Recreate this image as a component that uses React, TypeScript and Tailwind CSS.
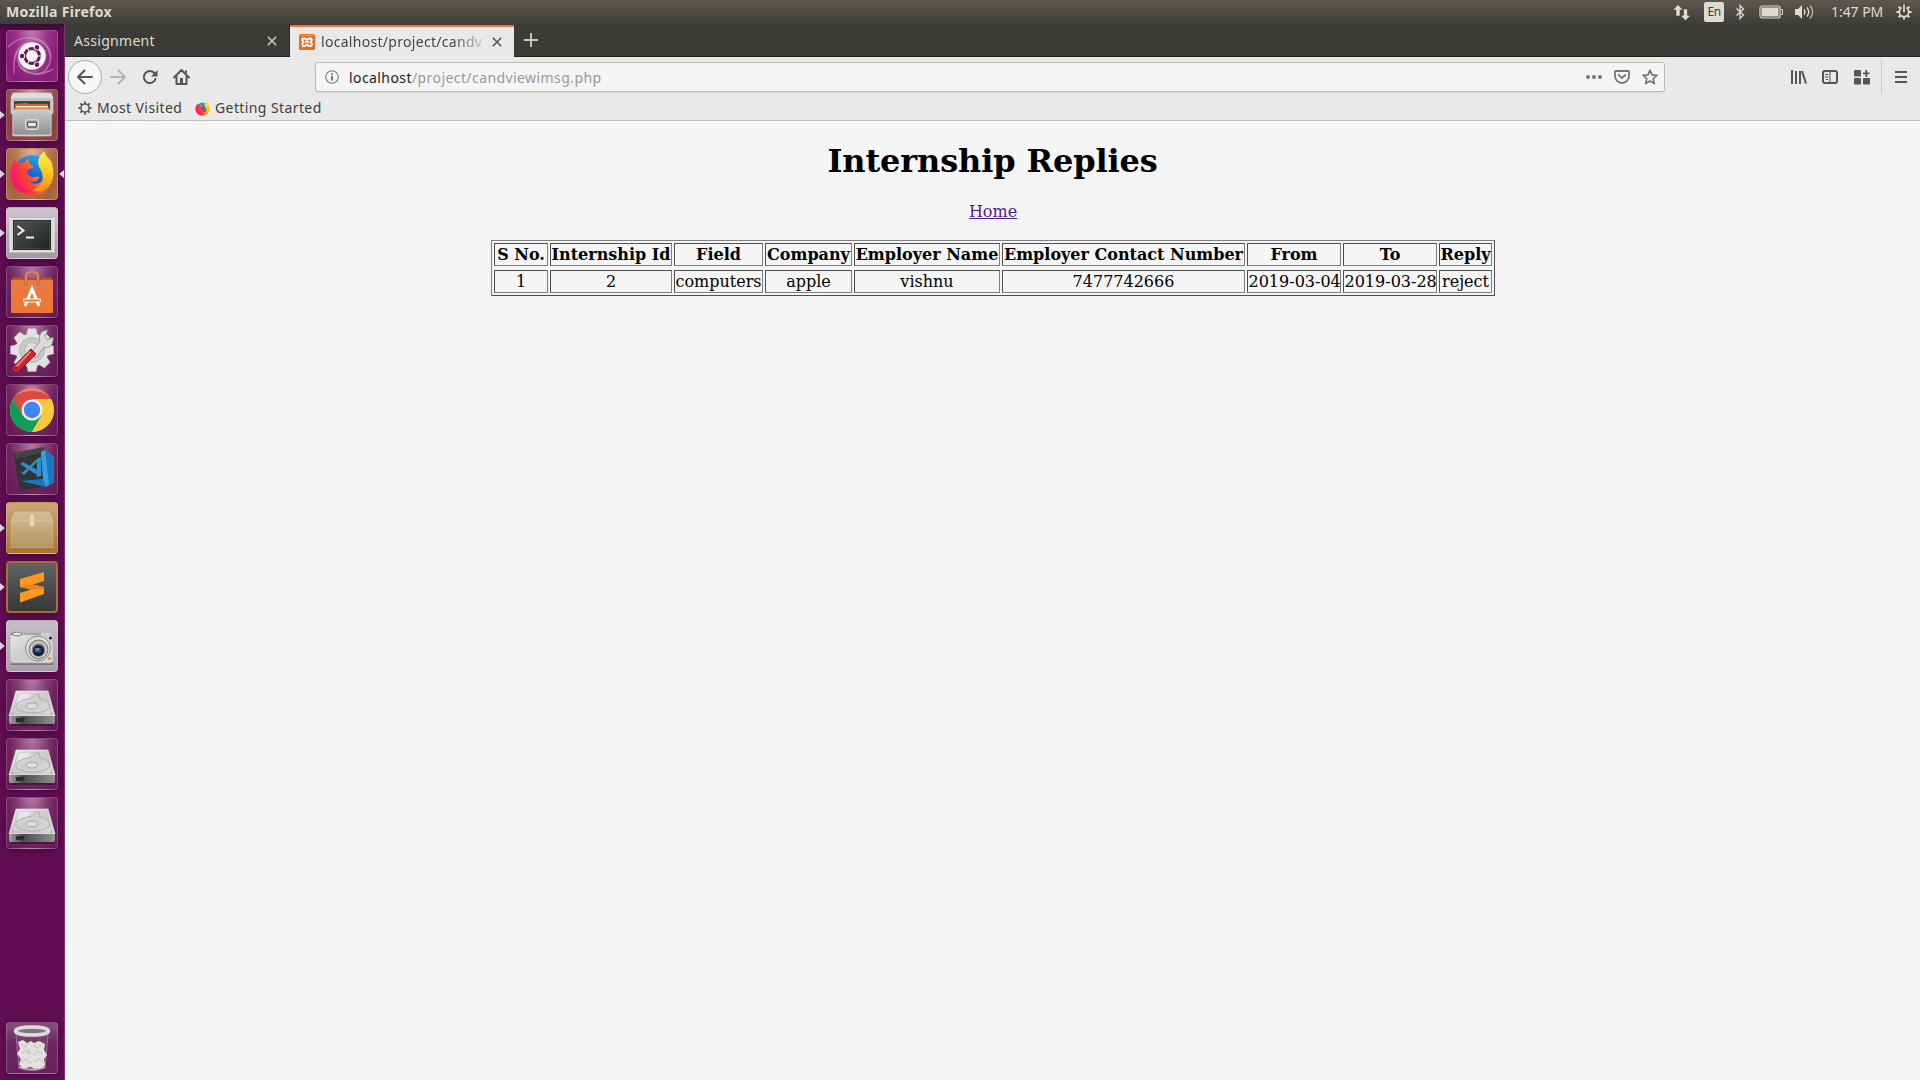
import type { ReactNode } from "react";

const columns = [
  { label: "S No.", value: "1", width: "w-[54px]" },
  { label: "Internship Id", value: "2", width: "w-[122px]" },
  { label: "Field", value: "computers", width: "w-[89px]" },
  { label: "Company", value: "apple", width: "w-[87px]" },
  { label: "Employer Name", value: "vishnu", width: "w-[146px]" },
  { label: "Employer Contact Number", value: "7477742666", width: "w-[243px]" },
  { label: "From", value: "2019-03-04", width: "w-[94px]" },
  { label: "To", value: "2019-03-28", width: "w-[94px]" },
  { label: "Reply", value: "reject", width: "w-[53px]" },
];

function IndicatorIcons() {
  return (
    <>
      <svg className="mr-[13px]" width="18" height="17" viewBox="0 0 18 17" fill="#dfdbd2">
        <path d="M5 .5 10 6H7v6H3V6H0zM12.500 16.500 7.500 11.500h3V5h4v6.500h3z" stroke="#3c3b37" strokeWidth=".5" />
      </svg>
      <span className="mr-[11px] flex h-5 w-5 items-center justify-center rounded-[2px] bg-[#dfdbd2] text-[12px] tracking-[-0.5px] text-[#3c3b37]">En</span>
      <svg className="mr-[13px]" width="11" height="16" viewBox="0 0 11 16" fill="none" stroke="#dfdbd2" strokeWidth="1.300">
        <path d="m1.500 4.500 7 6.500-3.500 3.500v-13L8.500 5l-7 6.500" />
      </svg>
      <svg className="mr-[12px]" width="24" height="14" viewBox="0 0 24 14">
        <rect x="1" y="1" width="20" height="12" rx="2" fill="none" stroke="#dfdbd2" strokeWidth="1.200" />
        <rect x="2.500" y="2.500" width="17" height="9" fill="#dfdbd2" />
        <path d="M22 4.500h1.500v5H22" fill="none" stroke="#dfdbd2" />
      </svg>
      <svg className="mr-[16px]" width="20" height="16" viewBox="0 0 20 16">
        <path d="M0 5h3l4-4v14l-4-4H0z" fill="#dfdbd2" />
        <g fill="none" stroke="#dfdbd2" strokeWidth="1.300">
          <path d="M9 5.500q2 2.500 0 5M12 3.500q3.500 4.500 0 9" />
          <path d="M15 1.500q5.500 6.500 0 13" stroke="#bcb9b0" />
        </g>
      </svg>
    </>
  );
}

function Gear({ size, color, power = false }: { size: number; color: string; power?: boolean }) {
  return (
    <svg width={size} height={size} viewBox="0 0 16 16" fill="none" stroke={color}>
      <circle cx="8" cy="8" r="4.700" strokeWidth="1.700" />
      {[0, 45, 90, 135, 180, 225, 270, 315].map((a) => (
        <path key={a} d="M8 3V.4" strokeWidth="2" transform={`rotate(${a} 8 8)`} />
      ))}
      {power && (
        <>
          <path d="M8 0v8" stroke="#484640" strokeWidth="4.500" />
          <path d="M8 .5V8" strokeWidth="1.800" />
        </>
      )}
    </svg>
  );
}

function FirefoxLogo({ className }: { className: string }) {
  return (
    <svg className={className} viewBox="0 0 48 48">
      <defs>
        <linearGradient id="foxBody" x1="0" y1=".7" x2="1" y2=".2">
          <stop offset="0" stopColor="#f5156c" />
          <stop offset=".35" stopColor="#ff4133" />
          <stop offset=".7" stopColor="#ff9a16" />
          <stop offset="1" stopColor="#fff036" />
        </linearGradient>
        <linearGradient id="foxGlobe" x1=".7" y1="0" x2=".3" y2="1">
          <stop offset="0" stopColor="#17aeef" />
          <stop offset=".5" stopColor="#1768d8" />
          <stop offset="1" stopColor="#332aa0" />
        </linearGradient>
        <linearGradient id="foxTail" x1="0" y1="0" x2="0" y2="1">
          <stop offset="0" stopColor="#fff44f" />
          <stop offset=".5" stopColor="#ffca21" />
          <stop offset="1" stopColor="#ff8b17" />
        </linearGradient>
      </defs>
      <circle cx="24" cy="24" r="19" fill="url(#foxGlobe)" />
      <path d="M7 8c0 3 1 5 2 6 2-2 5-2 7-1 1-2 3-4 5-5-1 3 0 5 2 7l3 2c-2 2-5 2-7 4 0 3 0 4 3 6 4 3 7-1 10 1-2 5-7 6-11 5 9 5 18 0 18-10 0-7-7-9-5-15 1-3 3-5 4-7 0 5 5 7 7 12 4 13-1 33-21 34C4 47-2 29 3 16c1-3 2-6 4-8z" fill="url(#foxBody)" />
      <path d="M37 1c-6 5-8 11-5 17 3 5 5 10 2 16-2 4-6 6-10 7 8 5 18 0 21-8 4-10 1-19-5-25-2-2-3-4-3-7z" fill="url(#foxTail)" />
      <path d="M9 14c-4 8-3 19 5 25 4 3 8 3 12 3-7 3-15 1-20-5-5-7-4-16-1-22z" fill="#f5156c" opacity=".6" />
    </svg>
  );
}

function Tile({ children, base, open = false, focused = false }: { children: ReactNode; base: string; open?: boolean; focused?: boolean }) {
  return (
    <div className="flex h-[52px] w-[64px] items-center">
      <span className={open ? "h-0 w-0 border-y-[4px] border-l-[5px] border-y-transparent border-l-[#ddd5dc]" : "w-[5px]"} />
      <div className={`ml-px h-[52px] w-[52px] shrink-0 overflow-hidden rounded-[4px] border border-white/20 shadow-[0_1px_5px_rgba(20,0,20,0.45)] ${base}`}>
        <svg className="-m-px" width="52" height="52" viewBox="0 0 52 52">{children}</svg>
      </div>
      <span className={focused ? "ml-px h-0 w-0 border-y-[4px] border-r-[5px] border-y-transparent border-r-[#ddd5dc]" : "w-px"} />
    </div>
  );
}

const glass = "bg-[radial-gradient(ellipse_at_50%_-15%,#bb88ae_0%,#874178_40%,#6f2460_65%,#641655_100%)]";

function Drive() {
  return (
    <Tile base={glass}>
      <path d="M5 44h42v3H5z" fill="#290923" opacity=".5" />
      <path d="M10 12h32l7 25H3z" fill="url(#metal)" stroke="#e2e2e2" strokeWidth=".7" />
      <path d="M3 37h46v6l-1 2H4l-1-2z" fill="url(#driveEdge)" />
      <path d="M10 39h9l-2 4h-7z" fill="#292b29" />
      <path d="M12 15h28l6 20H6z" fill="none" stroke="#bdbdbd" strokeWidth=".7" />
      <path d="M33 15c-5 0-5 4-10 5-9 1-14 5-13 9 2 6 29 7 33 0 2-4-2-8-9-9l-1-5" fill="none" stroke="#aaa" strokeWidth=".9" />
      <ellipse cx="26" cy="27" rx="6" ry="3" fill="#ddd" stroke="#9a9a9a" strokeWidth=".8" />
      <path d="M13 15h12l-3 4-11 4z" fill="#eee" opacity=".6" />
      <g fill="#888"><circle cx="6.500" cy="35" r=".8" /><circle cx="45.500" cy="35" r=".8" /></g>
    </Tile>
  );
}

function Launcher() {
  return (
    <aside className="flex w-[65px] shrink-0 flex-col border-r border-[#77366b] bg-[linear-gradient(#3b0b34_0px,#5d0c50_8px,#620d53_100%)] pt-[6px] pb-[6px]">
      <svg width="0" height="0" className="absolute">
        <defs>
          <linearGradient id="metal" x1="0" y1="0" x2="1" y2="1"><stop stopColor="#eee" /><stop offset=".5" stopColor="#ccc" /><stop offset="1" stopColor="#dedede" /></linearGradient>
          <linearGradient id="driveEdge"><stop stopColor="#a3a3a3" /><stop offset=".3" stopColor="#484b48" /><stop offset="1" stopColor="#909590" /></linearGradient>
          <linearGradient id="cabinet" x2="0" y2="1"><stop stopColor="#c9c9c9" /><stop offset="1" stopColor="#8f8f8f" /></linearGradient>
          <linearGradient id="box" x2="0" y2="1"><stop stopColor="#cdb48b" /><stop offset="1" stopColor="#b3935f" /></linearGradient>
          <linearGradient id="bag" x2="0" y2="1"><stop stopColor="#e77b45" /><stop offset="1" stopColor="#ef7631" /></linearGradient>
          <linearGradient id="screen" x2="1" y2="1"><stop stopColor="#515451" /><stop offset="1" stopColor="#202420" /></linearGradient>
        </defs>
      </svg>
      <div className="flex flex-col gap-[7px]">
        <Tile base="bg-[radial-gradient(ellipse_at_50%_-10%,#c185b5_0%,#993489_45%,#861c76_80%,#922783_100%)]">
          <g fill="none" stroke="#d4a0cc" strokeWidth="1.200" opacity=".6">
            <path d="M2 17C16 2 39 7 44 24M20 8c20-3 32 17 20 31M44 24c2 11-5 20-14 20" />
            <path d="M8 44C7 25 11 17 21 12M12 27c-1 14 12 22 36 12M16 36c6 10 18 10 28 5" />
          </g>
          <path d="M7 40c0-18 4-25 18-28l15 8c4 12-5 22-16 24C15 42 11 36 12 26 8 30 7 36 7 40" fill="#fff" opacity=".14" />
          <circle cx="26" cy="26.500" r="14" fill="#5d1754" opacity=".35" />
          <circle cx="26" cy="26" r="13.700" fill="#f7f4f7" />
          <circle cx="26" cy="26" r="7.400" fill="none" stroke="#651456" strokeWidth="3" />
          {[60, 180, 300].map((a) => (
            <g key={a} transform={`rotate(${a} 26 26)`}>
              <circle cx="36" cy="26" r="3.200" fill="#f7f4f7" />
              <circle cx="36" cy="26" r="2.200" fill="#651456" />
              <path d="M30 26h6" stroke="#f7f4f7" strokeWidth="1" transform="rotate(60 26 26)" />
            </g>
          ))}
        </Tile>

        <Tile open base="bg-[radial-gradient(ellipse_at_50%_-10%,#d3a8a6_0%,#a35c5e_45%,#8a3d43_80%,#95474c_100%)]">
          <path d="M7 4h38l2 5v15l-2 1v22H7V25l-2-1V9z" fill="#c5c5c5" stroke="#ddd" strokeWidth=".6" />
          <path d="M7 4h38l2 5H5z" fill="#dedede" />
          <path d="M8 12h36v9H8z" fill="#48413d" />
          <path d="m9 15 12-1 2 1h19v6H9z" fill="#d16a2e" />
          <path d="M10 17h32v1.500H10z" fill="#fff2dd" /><path d="M9 18.500h34V22H9z" fill="#ec8e4d" />
          <path d="M7 21h38v25H7z" fill="url(#cabinet)" stroke="#d0d0d0" strokeWidth=".8" />
          <rect x="19.500" y="30.500" width="13" height="10" rx="2" fill="#bababa" stroke="#d8d8d8" />
          <rect x="21.500" y="33" width="9" height="5" rx="1" fill="#e5e5e5" stroke="#575757" strokeWidth="1.300" />
        </Tile>

        <Tile open focused base="bg-[radial-gradient(ellipse_at_50%_-10%,#dfbca3_0%,#b97b55_45%,#a7633e_80%,#b16f4b_100%)]">
          <g transform="translate(3 2.500) scale(.95)"><FirefoxNested /></g>
        </Tile>

        <Tile open base="bg-[linear-gradient(#cfc3ce,#a496a5)]">
          <path d="M5 10h42v36H5z" fill="#8b858a" />
          <rect x="4" y="11" width="44" height="34" fill="#d7d7d4" stroke="#eee" />
          <rect x="7" y="13" width="38" height="30" fill="#181b18" />
          <path d="M8 14h36v28H8z" fill="url(#screen)" stroke="#575b57" strokeWidth=".7" />
          <path d="m11.500 19 6 4.500-6 4.500M20 30.500h8" fill="none" stroke="#eee" strokeWidth="2" />
        </Tile>

        <Tile base={glass}>
          <path d="M6 12h40v3H6z" fill="#bb491d" />
          <path d="M5 14h42v33H5z" fill="url(#bag)" />
          <path d="m5 14 4-3 2 3 3-3 3 3h18l3-3 3 3 3-3 3 3" fill="#c65224" />
          <path d="M20 19V10q0-4 4-4h4q4 0 4 4v9" fill="none" stroke="#be6845" strokeWidth="3" />
          <path d="M20 18V10q0-4 4-4h4q4 0 4 4v8" fill="none" stroke="#ef9470" strokeWidth="1" />
          <g fill="none" stroke="#fff" strokeWidth="3.200"><path d="m19 40 7-17 7 17" /></g>
          <path d="M18 33h16q1 1 0 3H18q-1-1 0-3z" fill="#ef7631" stroke="#fff" strokeWidth="1.200" />
        </Tile>

        <Tile base={glass}>
          <g stroke="#b9b9b9" strokeWidth=".5">
            {[0, 45, 90, 135, 180, 225, 270, 315].map((a) => (
              <path key={a} d="M22 3.500h8l2 9H20z" fill="#e2e2e2" transform={`rotate(${a} 26 25)`} />
            ))}
          </g>
          <circle cx="26" cy="25" r="16.500" fill="#e2e2e2" />
          <circle cx="26" cy="25" r="12.500" fill="#c9c9c9" stroke="#b4b4b4" />
          <circle cx="26" cy="25" r="7.500" fill="#ddd" stroke="#b8b8b8" />
          <path d="m25 28 9-12c-2-6 1-11 8-11l-3 6 2 4 6-3c1 8-4 12-9 10l-8 11z" fill="#d9dbd9" stroke="#888" strokeWidth=".8" />
          <path d="m25 24 5 5-18 18q-5 1-6-4z" fill="#ca2628" stroke="#8c171b" />
          <path d="M24 27 10 42" stroke="#ef7777" strokeWidth="2" strokeLinecap="round" />
          <circle cx="10" cy="43" r="1.300" fill="#681b24" />
        </Tile>

        <Tile base={glass}>
          <circle cx="26" cy="26.500" r="22.500" fill="#3b1335" opacity=".4" />
          <circle cx="26" cy="26" r="22" fill="#ffcd40" />
          <path d="M26 26 15.300 31 7 15A22 22 0 0 1 45 15H26z" fill="#d94b40" />
          <path d="M7 15A22 22 0 0 0 26 48l9.500-16.500L26 26 16.500 31.500z" fill="#109d59" />
          <path d="M26 15h19A22 22 0 0 1 26 48l9.500-16.500z" fill="#f7c83b" />
          <path d="M10 11A22 22 0 0 1 42 11q-16-8-32 0" fill="#fff" opacity=".3" />
          <circle cx="26" cy="26" r="10.500" fill="#f1f1f1" /><circle cx="26" cy="26" r="8.200" fill="#4385f4" />
        </Tile>

        <Tile base={glass}>
          <path d="m7 10 31-6 8 38-32 6z" fill="#323334" />
          <path d="m35 9 4-2 9 6v27l-8 4-26-6 23-2z" fill="#1679bd" />
          <path d="m35 9 4-2 4 34-3 3-3-8z" fill="#3b9de1" />
          <path d="m14 21 3-2 18 10-1 4-3-1zM14 28l2 2 16-15 3-1v19l-4 1V19L18 32l-4-3z" fill="#2f8fce" />
          <path d="m8 10 30-6 1 5-30 7z" fill="#fff" opacity=".08" />
        </Tile>

        <Tile open base="bg-[linear-gradient(#caa776,#ad742f)]">
          <path d="m9 11 34 0 4 9v28H5V20z" fill="#8d6a39" opacity=".6" />
          <path d="M9 10h34l4 9H5z" fill="#d0b88f" stroke="#e3cfae" strokeWidth=".6" />
          <path d="M5 19h42v27H5z" fill="url(#box)" stroke="#d7bd92" strokeWidth=".5" />
          <path d="M24 12h4v12h-4z" fill="#e5d7bd" />
        </Tile>

        <Tile open base="bg-[linear-gradient(#606263,#353738)] !border-2 !border-[#a96f32]">
          <g transform="translate(-1 -1)">
            <path d="M14 18 38 11v9l-11 3.500L38 26v7l-24 8.500V32l11-3.500L14 26z" fill="#ff9922" />
            <path d="m14 26 13-2.500L38 26v2l-13 .5z" fill="#e8851a" />
          </g>
        </Tile>

        <Tile open base="bg-[linear-gradient(#c9bdc9,#aa9dab)]">
          <path d="M5 42h42v3H5z" fill="#81767f" />
          <path d="M7 14V12q5-3 9 0l1 1 25-1q5 0 5 4v24q0 3-3 3H7q-3 0-3-3V16z" fill="url(#metal)" stroke="#aaa" strokeWidth=".7" />
          <path d="M5 14q5-4 12 0-5 4-12 0M18 14h17" fill="none" stroke="#777" strokeWidth="1" />
          <circle cx="32" cy="28.500" r="12.500" fill="#ddd" stroke="#888" />
          <circle cx="32.500" cy="29.500" r="9.500" fill="#b5b5b5" stroke="#777" />
          <circle cx="32.500" cy="30" r="7.500" fill="#85888a" stroke="#e5e5e5" />
          <circle cx="32.500" cy="30.500" r="5.500" fill="#171b24" />
          <path d="M28.500 28h7v5h-7z" fill="#23446f" /><path d="M29.500 28h4v3h-4z" fill="#5f86b8" />
          <circle cx="44.500" cy="18" r="1.500" fill="#252525" /><path d="M42 37h3v3h-3z" fill="#f39a20" />
        </Tile>
        <Drive /><Drive /><Drive />
      </div>

      <div className="mt-auto">
        <Tile base="bg-[linear-gradient(#83517a,#6d2861_40%,#682159)]">
          <path d="m10 12 3 34q13 5 26 0l3-34z" fill="#7b4373" stroke="#ac83a6" strokeWidth="1" opacity=".8" />
          <path d="m12 20 5-2 4 3 4-2 3 2 5-2 6 3-1 6 3 5-3 4 1 6-3 3-7 1-5-2-7 2-4-5 2-5-4-5 3-5z" fill="#e1e2df" />
          <path d="m15 22 4 3 4-4M27 23l4 3 4-3M16 31l4-3 5 4M27 33l5-4 4 3M15 40l5-3 5 4M28 40l5-3 4 3M24 26l-2 6" stroke="#c6c9c3" strokeWidth="1.200" fill="none" />
          <path d="M13 45q13 5 26 0" fill="none" stroke="#d3c5d1" strokeWidth="1.200" />
          <ellipse cx="26" cy="9" rx="16.500" ry="4" fill="#89717f" stroke="#dbdcd9" strokeWidth="3.500" />
        </Tile>
      </div>
    </aside>
  );
}

function FirefoxNested() {
  return (
    <svg width="48" height="48" viewBox="0 0 48 48"><FirefoxLogo className="h-12 w-12" /></svg>
  );
}

function CloseIcon({ color }: { color: string }) {
  return <svg className="shrink-0" width="10" height="10" viewBox="0 0 10 10"><path d="m.8.8 8.400 8.400M9.200.8.800 9.200" stroke={color} strokeWidth="1.600" /></svg>;
}

function BrowserTabs() {
  return (
    <div className="flex h-[33px] border-b border-[#242321] bg-[#3c3b37]">
      <div className="flex w-[225px] items-center justify-between border-r border-[#242321] pt-px pr-3 pl-[9px] text-[#dedbd3]">
        <span className="tracking-[0.3px]">Assignment</span><CloseIcon color="#cbc8c1" />
      </div>
      <div className="mt-px mb-[-1px] flex h-[32px] w-[224px] items-center border-t-2 border-[#f07746] bg-[#e9e9e9] pb-px pl-[9px] text-[#444]">
        <svg className="mr-[6px] shrink-0" width="16" height="16" viewBox="0 0 16 16">
          <rect width="16" height="16" rx="1.500" fill="#e4701e" /><path d="M2 1.500h12" stroke="#f1a975" />
          <path d="M4 4.500h2L8 6l2-1.500h2L13 6l-1.500 2L13 10l-1 2h-2L8 10.500 6 12H4l-1-2 1.500-2L3 6z" fill="none" stroke="#fff" strokeWidth="2" strokeLinejoin="round" />
          <path d="M6 8h4" stroke="#fff" strokeWidth="1.500" />
        </svg>
        <span className="w-[166px] tracking-[0.3px] whitespace-nowrap [mask-image:linear-gradient(to_right,black_130px,transparent_168px)]">localhost/project/candv</span>
        <span className="mr-3 ml-[7px]"><CloseIcon color="#555" /></span>
      </div>
      <svg className="mt-[9px] ml-[10px]" width="14" height="14" viewBox="0 0 14 14"><path d="M7 0v14M0 7h14" stroke="#cbc8c1" strokeWidth="2" /></svg>
    </div>
  );
}

function Toolbar() {
  return (
    <div className="flex h-10 items-center">
      <div className="ml-[3px] flex h-[34px] w-[34px] items-center justify-center rounded-full border border-[#aaa] bg-[#f7f7f7]">
        <svg width="16" height="16" viewBox="0 0 16 16" fill="none" stroke="#555" strokeWidth="2" strokeLinecap="round" strokeLinejoin="round"><path d="M15 8H1.500M7.500 1.500 1 8l6.500 6.500" /></svg>
      </div>
      <svg className="ml-[8px]" width="16" height="16" viewBox="0 0 16 16" fill="none" stroke="#b5b5b5" strokeWidth="2" strokeLinecap="round" strokeLinejoin="round"><path d="M1 8h13.500M8.500 1.500 15 8l-6.500 6.500" /></svg>
      <svg className="ml-[16px]" width="16" height="16" viewBox="0 0 16 16"><path d="M12.300 4A6 6 0 1 0 13.500 10" fill="none" stroke="#555" strokeWidth="2" strokeLinecap="round" /><path d="M15.500 1v6.500H9z" fill="#555" /></svg>
      <svg className="ml-[15px]" width="17" height="16" viewBox="0 0 17 16"><path d="M1 8.500 8.500 1 16 8.500M3.500 7v8h10V7" fill="none" stroke="#555" strokeWidth="2" strokeLinejoin="round" strokeLinecap="round" /><path d="M7 9h3v6H7z" fill="#555" /><path d="M12 1.500h2V5l-2-2z" fill="#555" /></svg>
      <div className="ml-[125px] flex h-[30px] w-[1350px] items-center rounded-[3px] border border-[#bebbb6] bg-[#f5f5f5] shadow-[0_1px_2px_rgba(0,0,0,0.06)]">
        <svg className="ml-[9px]" width="14" height="14" viewBox="0 0 14 14"><circle cx="7" cy="7" r="6.300" fill="none" stroke="#777" strokeWidth="1.100" /><path d="M7 6v4.500M7 3.300v1.500" stroke="#666" strokeWidth="1.800" /></svg>
        <span className="ml-[10px] pt-px tracking-[0.42px] text-[#999]"><span className="text-[#222]">localhost</span>/project/candviewimsg.php</span>
        <svg className="ml-auto" width="16" height="4" viewBox="0 0 16 4" fill="#777"><circle cx="2" cy="2" r="2" /><circle cx="8" cy="2" r="2" /><circle cx="14" cy="2" r="2" /></svg>
        <svg className="ml-[12px]" width="16" height="14" viewBox="0 0 16 14" fill="none" stroke="#777" strokeWidth="1.800" strokeLinecap="round" strokeLinejoin="round"><path d="M2 1h12q1 0 1 1v4a7 7 0 0 1-14 0V2q0-1 1-1zM4.700 5 8 8.200 11.300 5" /></svg>
        <svg className="mr-[6px] ml-[12px]" width="16" height="16" viewBox="0 0 16 16" fill="none" stroke="#777" strokeWidth="1.700" strokeLinejoin="round"><path d="m8 1.200 2 4.600 5 .5-3.800 3.300 1.200 5L8 12l-4.400 2.600 1.200-5L1 6.300l5-.5z" /></svg>
      </div>
      <svg className="ml-[126px]" width="16" height="14" viewBox="0 0 16 14" stroke="#555" strokeWidth="2"><path d="M1 0v14M5 1v13M9 1v13M11 1l4 12.500" /></svg>
      <svg className="ml-[15px]" width="16" height="14" viewBox="0 0 16 14" fill="none" stroke="#555"><rect x="1" y="1" width="14" height="12" rx="2" strokeWidth="2" /><path d="M8 1v12M3 4.500h3.500M3 7h3.500M4 9.500h2" strokeWidth="1" /></svg>
      <svg className="ml-[16px]" width="16" height="16" viewBox="0 0 16 16" fill="#555"><rect y="1" width="7" height="6.500" rx="1" /><rect y="9" width="7" height="6.500" rx="1" /><rect x="9" y="9" width="7" height="6.500" rx="1" /><path d="M12.300 1v7M9 4.300h6.500" stroke="#555" strokeWidth="1.800" /></svg>
      <span className="ml-[11px] h-[34px] w-px bg-[#cbcbcb]" />
      <svg className="ml-[13px]" width="12" height="12" viewBox="0 0 12 12" stroke="#555" strokeWidth="2"><path d="M0 1h12M0 6h12M0 11h12" /></svg>
    </div>
  );
}

export default function App() {
  return (
    <div className="flex h-[1080px] w-[1920px] flex-col overflow-hidden bg-[#f5f5f5] font-['Noto_Sans',sans-serif] text-[14px] leading-5">
      <header className="flex h-6 shrink-0 items-center bg-linear-to-b from-[#5b594f] to-[#3e3d39] pl-[6px] text-[#dfdbd2]">
        <span className="mr-auto text-[14px] font-bold tracking-[0.3px]">Mozilla Firefox</span>
        <IndicatorIcons />
        <span className="mr-[13px] w-[52px] text-[14px] tracking-[-0.05px] whitespace-nowrap">1:47 PM</span>
        <span className="mr-2"><Gear size={16} color="#dfdbd2" power /></span>
      </header>
      <div className="flex min-h-0 flex-1">
        <Launcher />
        <div className="flex min-w-0 flex-1 flex-col">
          <BrowserTabs />
          <div className="h-16 shrink-0 border-b border-[#bcbcbc] bg-[#e9e9e9]">
            <Toolbar />
            <div className="flex h-[22px] items-center pl-[13px] tracking-[0.4px] text-[#3e3e3e]">
              <Gear size={14} color="#555" />
              <span className="ml-[5px] w-[98px] whitespace-nowrap">Most Visited</span>
              <FirefoxLogo className="h-[15px] w-[15px]" />
              <span className="ml-[5px] whitespace-nowrap">Getting Started</span>
            </div>
          </div>
          <main className="flex flex-col items-center font-['DejaVu_Serif',serif] text-[16px] text-black">
            <h1 className="mt-[21px] text-[32px] leading-[38px] font-bold tracking-[-0.13px]">Internship Replies</h1>
            <a href="#" className="mt-[22px] ml-px leading-[19px] text-[#551a8b] underline">Home</a>
            <table className="mt-[19px] w-[1004px] table-fixed border-separate border-spacing-[2px] border border-t-[#808080] border-r-[#4f4f4f] border-b-[#4f4f4f] border-l-[#808080]">
              <thead>
                <tr>
                  {columns.map((c) => (
                    <th key={c.label} className={`h-[23px] border border-t-[#4f4f4f] border-r-[#808080] border-b-[#808080] border-l-[#4f4f4f] p-0 pl-px text-center leading-[19px] font-bold whitespace-nowrap ${c.width}`}>{c.label}</th>
                  ))}
                </tr>
              </thead>
              <tbody>
                <tr />
                <tr>
                  {columns.map((c) => (
                    <td key={c.label} className="h-[23px] border border-t-[#4f4f4f] border-r-[#808080] border-b-[#808080] border-l-[#4f4f4f] p-0 pl-px text-center leading-[19px] whitespace-nowrap">{c.value}</td>
                  ))}
                </tr>
              </tbody>
            </table>
          </main>
        </div>
      </div>
    </div>
  );
}
